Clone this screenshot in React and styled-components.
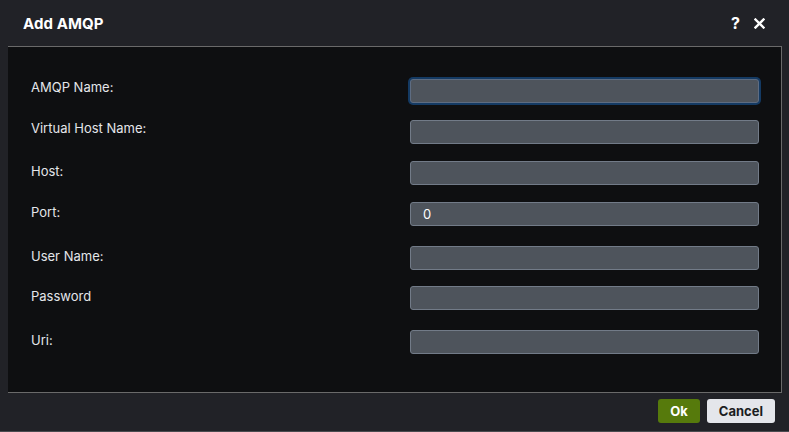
import styled, { createGlobalStyle } from "styled-components";

const Global = createGlobalStyle`
  html, body { margin: 0; padding: 0; background: #212227; }
  body { font-family: Inter, "Liberation Sans", Arial, sans-serif; }
`;

const Dialog = styled.div`
  width: 789px;
  height: 432px;
  box-sizing: border-box;
  background: #212227;
  border-bottom: 1px solid #4a4b50;
  display: flex;
  flex-direction: column;
`;

const Header = styled.div`
  height: 46px;
  display: flex;
  align-items: center;
  justify-content: space-between;
  padding: 0 24px 0 23px;
  box-sizing: border-box;
`;

const Title = styled.h1`
  margin: 0;
  font-size: 15px;
  font-weight: 700;
  color: #ffffff;
  letter-spacing: 0.1px;
`;

const Tools = styled.div`
  display: flex;
  align-items: center;
  gap: 14px;
  color: #ffffff;
  font-weight: 700;
  font-size: 16px;
`;

const Body = styled.div`
  margin-left: 8px;
  margin-right: 7px;
  height: 347px;
  box-sizing: border-box;
  background: #0e0f11;
  border: 1px solid #6a6a6a;
  border-left: none;
  padding: 32px 22px 0 23px;
  display: flex;
  flex-direction: column;
`;

const Row = styled.div`
  display: flex;
  align-items: center;
  justify-content: space-between;
  height: 24px;
  margin-bottom: ${(p) => p.gap}px;
`;

const Label = styled.label`
  font-size: 13px;
  color: #e4e6ea;
  margin-top: ${(p) => (p.up ? -8 : -4)}px;
`;

const Input = styled.input`
  width: 349px;
  height: 24px;
  box-sizing: border-box;
  background: #4e545c;
  border: 1px solid ${(p) => (p.focused ? "#5d6c82" : "#727b88")};
  border-radius: 3px;
  color: #ffffff;
  font-family: inherit;
  font-size: 13px;
  padding: 0 12px;
  outline: none;
  box-shadow: ${(p) => (p.focused ? "0 0 0 2px #143a63" : "none")};
`;

const Footer = styled.div`
  flex: 1;
  display: flex;
  align-items: center;
  justify-content: flex-end;
  gap: 7px;
  padding-right: 14px;
  padding-bottom: 2px;
`;

const Button = styled.button`
  height: 24px;
  padding: 0 12px;
  border: none;
  border-radius: 3px;
  font-family: inherit;
  font-weight: 700;
  font-size: 13px;
  background: ${(p) => (p.primary ? "#567a0c" : "#e4e6eb")};
  color: ${(p) => (p.primary ? "#ffffff" : "#1b1d22")};
  cursor: pointer;
`;

const fields = [
  { label: "AMQP Name:", gap: 17, focused: true, up: true },
  { label: "Virtual Host Name:", gap: 17, up: true },
  { label: "Host:", gap: 17 },
  { label: "Port:", gap: 20, value: "0" },
  { label: "User Name:", gap: 16 },
  { label: "Password", gap: 20 },
  { label: "Uri:", gap: 0 },
];

export default function App() {
  return (
    <>
      <Global />
      <Dialog>
        <Header>
          <Title>Add AMQP</Title>
          <Tools>
            <span>?</span>
            <svg width="11" height="11" viewBox="0 0 11 11">
              <path d="M1.5 1.5 L9.5 9.5 M9.5 1.5 L1.5 9.5" stroke="#fff" strokeWidth="2.4" strokeLinecap="square" />
            </svg>
          </Tools>
        </Header>
        <Body>
          {fields.map((f) => (
            <Row key={f.label} gap={f.gap}>
              <Label up={f.up}>{f.label}</Label>
              <Input focused={f.focused} defaultValue={f.value || ""} type={f.label === "Password" ? "password" : "text"} />
            </Row>
          ))}
        </Body>
        <Footer>
          <Button primary>Ok</Button>
          <Button>Cancel</Button>
        </Footer>
      </Dialog>
    </>
  );
}
